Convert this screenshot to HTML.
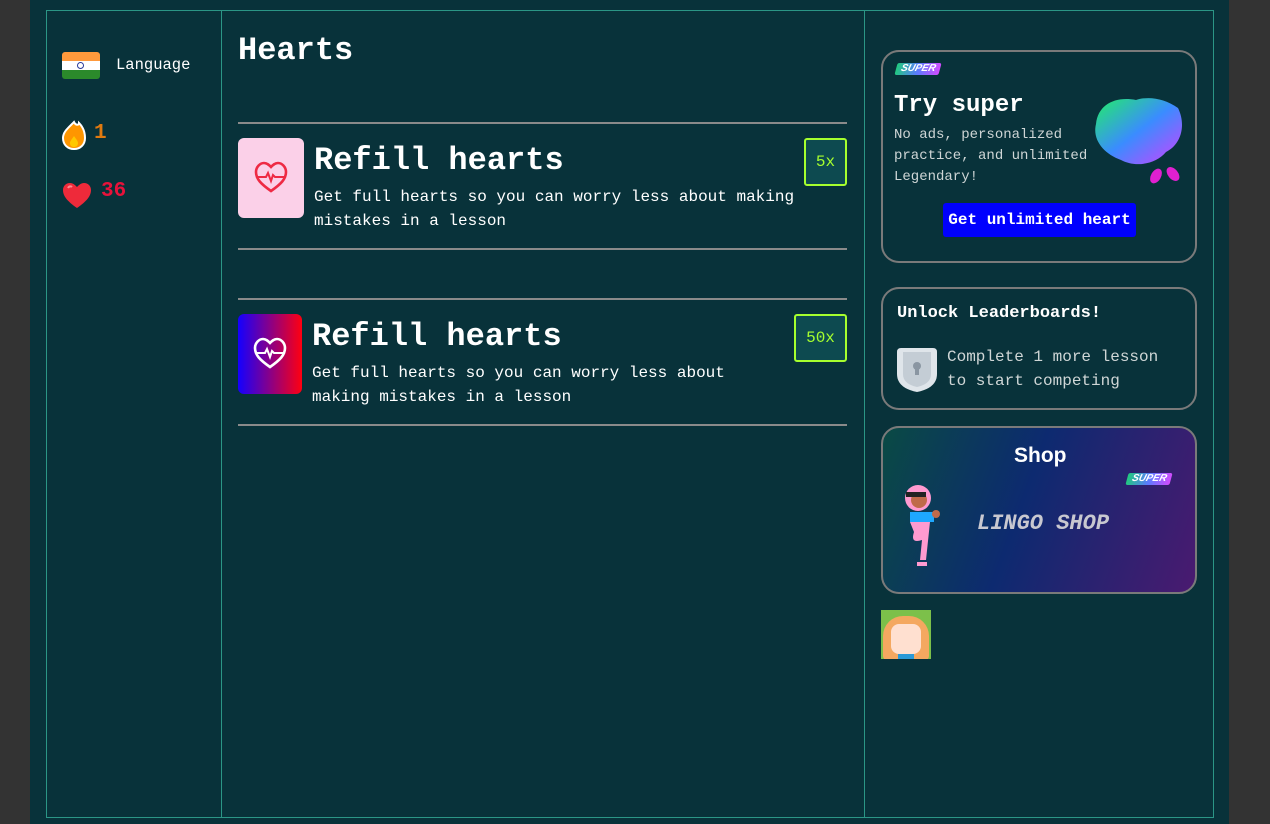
<!DOCTYPE html>
<html><head><meta charset="utf-8"><style>
*{margin:0;padding:0;box-sizing:border-box}
body{width:1270px;height:824px;background:#333;position:relative;overflow:hidden;font-family:"Liberation Mono","DejaVu Sans Mono",monospace;color:#fff}
.a{position:absolute}
#bg{left:30px;top:0;width:1199px;height:824px;background:#08323a}
.vl{position:absolute;width:1px;background:#2b9686}
.hl{position:absolute;height:1px;background:#2b9686}
.sep{position:absolute;left:238px;width:609px;height:2px;background:#8a8a8a}
.t{font-weight:bold;font-size:32px;white-space:nowrap}
.d{font-size:16px;line-height:24px;white-space:nowrap}
.btn{position:absolute;border:2px solid #a6ff2e;border-radius:3px;background:#0d4a50;color:#a6ff2e;font-size:16px;display:flex;align-items:center;justify-content:center}
.card{position:absolute;left:881px;width:316px;border:2px solid #7a7a7a;border-radius:18px}
.sup{position:absolute;font-size:10px;font-weight:bold;font-style:italic;color:#fff;background:linear-gradient(90deg,#21c97f,#5b7bff,#d24cff);transform:skewX(-15deg);padding:0 5px;line-height:12px;border-radius:2px;font-family:"Liberation Sans",sans-serif}
</style></head><body>
<div class="a" id="bg"></div>
<div class="hl" style="left:46px;top:10px;width:1168px"></div>
<div class="hl" style="left:46px;top:817px;width:1168px"></div>
<div class="vl" style="left:46px;top:10px;height:808px"></div>
<div class="vl" style="left:221px;top:10px;height:808px"></div>
<div class="vl" style="left:864px;top:10px;height:808px"></div>
<div class="vl" style="left:1213px;top:10px;height:808px"></div>

<div class="a" style="left:62px;top:52px;width:38px;height:27px;border-radius:3px;overflow:hidden">
<div style="height:9px;background:#ff9a3c"></div><div style="height:9px;background:#fff;position:relative"><div style="position:absolute;left:15px;top:1px;width:7px;height:7px;border:1px solid #2a3a9a;border-radius:50%"></div></div><div style="height:9px;background:#2b8a2b"></div></div>
<div class="a" style="left:116px;top:56px;font-size:15.5px">Language</div>
<svg class="a" style="left:61px;top:120px" width="26" height="30" viewBox="0 0 26 30"><path d="M13 2 C15 6 18 5 18 3 C23 8 24 14 24 18 C24 25 19 29 13 29 C7 29 2 25 2 18 C2 12 7 8 13 2Z" fill="#ff9600" stroke="#fff" stroke-width="2"/><path d="M13 16 C15 19 17 21 17 23 C17 26 15 27 13 27 C11 27 9 26 9 23 C9 21 11 19 13 16Z" fill="#ffc800"/></svg>
<div class="a" style="left:94px;top:122px;font-size:21px;font-weight:bold;color:#e07a10">1</div>
<svg class="a" style="left:62px;top:182px" width="30" height="27" viewBox="0 0 30 27"><path d="M15 26 C5 19 1 14 1 8 C1 4 4 1 8 1 C11 1 13 3 15 5 C17 3 19 1 22 1 C26 1 29 4 29 8 C29 14 25 19 15 26Z" fill="#ee2a3a"/><path d="M6 6 C7 4 9 4 10 5" stroke="#ff8a90" stroke-width="2" fill="none"/></svg>
<div class="a" style="left:101px;top:180px;font-size:21px;font-weight:bold;color:#e8123a">36</div>

<div class="a t" style="left:238px;top:32px">Hearts</div>
<div class="sep" style="top:122px"></div>
<div class="a" style="left:238px;top:138px;width:66px;height:80px;border-radius:6px;background:#fbd0e8"></div>
<svg class="a" style="left:253px;top:160px" width="36" height="34" viewBox="0 0 36 34"><path d="M18 31 C8 24 3 19 3 12 C3 7 7 3 11 3 C14 3 16 5 18 7 C20 5 22 3 25 3 C29 3 33 7 33 12 C33 19 28 24 18 31Z" fill="none" stroke="#ee2a44" stroke-width="2.6"/><path d="M4 17 H13 L15 13 L18 21 L20 15 L22 17 H32" fill="none" stroke="#ee2a44" stroke-width="2"/></svg>
<div class="a t" style="left:314px;top:142px">Refill hearts</div>
<div class="a d" style="left:314px;top:185px">Get full hearts so you can worry less about making<br>mistakes in a lesson</div>
<div class="btn" style="left:804px;top:138px;width:43px;height:48px">5x</div>
<div class="sep" style="top:248px"></div>

<div class="sep" style="top:298px"></div>
<div class="a" style="left:238px;top:314px;width:64px;height:80px;border-radius:6px;background:linear-gradient(90deg,#1400ff,#ff0010)"></div>
<svg class="a" style="left:252px;top:336px" width="36" height="34" viewBox="0 0 36 34"><path d="M18 31 C8 24 3 19 3 12 C3 7 7 3 11 3 C14 3 16 5 18 7 C20 5 22 3 25 3 C29 3 33 7 33 12 C33 19 28 24 18 31Z" fill="none" stroke="#fff" stroke-width="2.6"/><path d="M4 17 H13 L15 13 L18 21 L20 15 L22 17 H32" fill="none" stroke="#fff" stroke-width="2"/></svg>
<div class="a t" style="left:312px;top:318px">Refill hearts</div>
<div class="a d" style="left:312px;top:361px">Get full hearts so you can worry less about<br>making mistakes in a lesson</div>
<div class="btn" style="left:794px;top:314px;width:53px;height:48px">50x</div>
<div class="sep" style="top:424px"></div>

<div class="card" style="top:50px;height:213px"></div>
<div class="sup" style="left:896px;top:63px">SUPER</div>
<div class="a" style="left:894px;top:92px;font-size:24px;font-weight:bold">Try super</div>
<div class="a" style="left:894px;top:125px;font-size:14px;line-height:21px;color:#cfd6d6">No ads, personalized<br>practice, and unlimited<br>Legendary!</div>
<svg class="a" style="left:1086px;top:94px" width="100" height="94" viewBox="0 0 100 94"><defs><linearGradient id="g" x1="0" y1="0" x2="1" y2="1"><stop offset="0" stop-color="#22ee66"/><stop offset=".5" stop-color="#3a8cff"/><stop offset="1" stop-color="#d040ff"/></linearGradient></defs><path d="M10 30 C12 10 30 2 50 6 C62 2 78 4 92 14 C100 30 96 50 80 58 C70 70 50 74 35 66 C18 60 6 46 10 30Z" fill="url(#g)"/><ellipse cx="70" cy="82" rx="5" ry="8" fill="#e020d0" transform="rotate(30 70 82)"/><ellipse cx="87" cy="80" rx="5" ry="8" fill="#e020d0" transform="rotate(-40 87 80)"/></svg>
<div class="a" style="left:943px;top:203px;width:193px;height:34px;background:#0000ff;border-radius:3px;font-size:16px;font-weight:bold;display:flex;align-items:center;justify-content:center">Get unlimited heart</div>

<div class="card" style="top:287px;height:123px"></div>
<div class="a" style="left:897px;top:304px;font-size:17px;font-weight:bold">Unlock Leaderboards!</div>
<svg class="a" style="left:897px;top:346px" width="40" height="46" viewBox="0 0 40 46"><path d="M4 2 H36 Q40 2 40 6 V28 Q40 42 20 46 Q0 42 0 28 V6 Q0 2 4 2Z" fill="#dfe5ea"/><path d="M6 6 H34 V28 Q34 38 20 41 Q6 38 6 28Z" fill="#c4cdd5"/><circle cx="20" cy="20" r="4" fill="#8a96a2"/><rect x="18" y="21" width="4" height="8" fill="#8a96a2"/></svg>
<div class="a" style="left:947px;top:345px;font-size:16px;line-height:24px;color:#cfd6d6">Complete 1 more lesson<br>to start competing</div>

<div class="card" style="top:426px;height:168px;background:linear-gradient(110deg,#0a4a44 0%,#0d2a70 45%,#4a1a70 100%)"></div>
<div class="a" style="left:1014px;top:444px;font-size:21px;font-weight:bold;font-family:'Liberation Sans',sans-serif">Shop</div>
<div class="sup" style="left:1127px;top:473px">SUPER</div>
<div class="a" style="left:977px;top:511px;font-size:22px;font-style:italic;font-weight:bold;color:#c8c8d0">LINGO SHOP</div>
<svg class="a" style="left:900px;top:484px" width="44" height="84" viewBox="0 0 44 84"><circle cx="18" cy="14" r="13" fill="#ff9ad0"/><circle cx="19" cy="16" r="8" fill="#c06a4a"/><rect x="6" y="8" width="20" height="5" fill="#222"/><rect x="10" y="28" width="24" height="10" fill="#1ea8ff"/><path d="M10 38 H30 L26 76 H20 L22 56 Q10 60 14 48Z" fill="#ff9ad0"/><rect x="17" y="78" width="10" height="4" fill="#ff9ad0"/><circle cx="36" cy="30" r="4" fill="#c06a4a"/></svg>
<div class="a" style="left:881px;top:610px;width:50px;height:49px;background:#7cc04a;overflow:hidden">
<div style="position:absolute;left:2px;top:6px;width:46px;height:44px;background:#f4a860;border-radius:20px 20px 4px 4px"></div>
<div style="position:absolute;left:10px;top:14px;width:30px;height:30px;background:#ffe0d0;border-radius:8px"></div>
<div style="position:absolute;left:17px;top:44px;width:16px;height:6px;background:#2a9ad8"></div>
</div>
</body></html>
